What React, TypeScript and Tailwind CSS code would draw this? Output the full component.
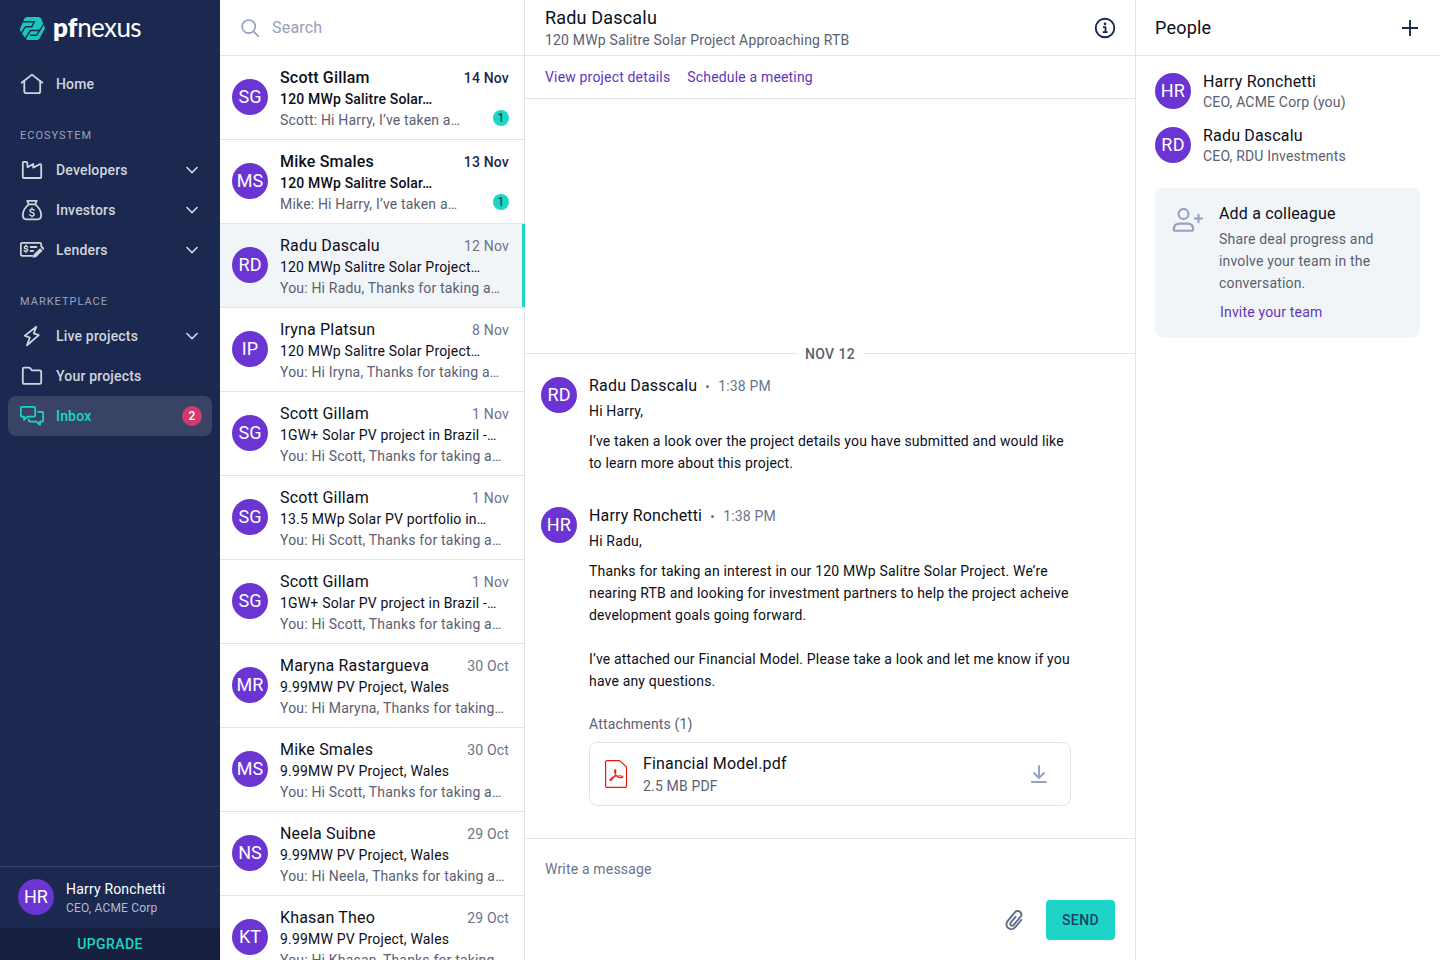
import React from "react";

type IconProps = { children: React.ReactNode; className?: string; width?: number };

function Icon({ children, className = "", width = 1.8 }: IconProps) {
  return (
    <svg
      viewBox="0 0 24 24"
      className={`size-6 shrink-0 ${className}`}
      fill="none"
      stroke="currentColor"
      strokeWidth={width}
      strokeLinecap="round"
      strokeLinejoin="round"
    >
      {children}
    </svg>
  );
}

const HomeIcon = () => (
  <Icon>
    <path d="M1.7 10.8 12 2.6l10.3 8.2" />
    <path d="M4.3 9v10.2a2 2 0 0 0 2 2h11.9a2 2 0 0 0 2-2V9" />
  </Icon>
);
const FactoryIcon = () => (
  <Icon>
    <path d="M2.8 19V4.8c0-.6.4-1 1-1h2.4c.6 0 1 .4 1 1L7.6 9.2 13.2 6v3.6l6.6-3.4c.7-.3 1.4 0 1.4.8V19c0 .6-.4 1-1 1H3.8c-.6 0-1-.4-1-1Z" />
  </Icon>
);
const MoneyBagIcon = () => (
  <Icon>
    <path d="M8.8 6.4 7.2 2.8h9.6l-1.6 3.6Z" />
    <path d="M8.8 6.4C6 8.6 2.8 12.8 2.8 17.3c0 2.2 1.3 4 3.6 4h11.200c2.300 0 3.600-1.800 3.600-4 0-4.500-3.200-8.700-6-10.900" />
    <path
      strokeWidth="1.4"
      d="M14.1 12.3c-.3-.8-1.1-1.1-2.1-1.1-1.2 0-2.1.6-2.1 1.6 0 2.4 4.4 1.1 4.4 3.5 0 1-1 1.6-2.3 1.6-1.2 0-2.1-.4-2.4-1.3M12 10v1.2M12 17.900v1.200"
    />
  </Icon>
);
const LenderIcon = () => (
  <Icon>
    <path d="M12.5 17.8H2.3c-.9 0-1.5-.6-1.5-1.5V6.3c0-.9.6-1.5 1.5-1.5h17.4c.9 0 1.5.6 1.500 1.500v1.900" />
    <path
      strokeWidth="1.4"
      d="M7.600 9c-.2-.6-.8-.8-1.600-.8-1 0-1.700.4-1.700 1.200 0 1.900 3.500.9 3.500 2.700 0 .8-.8 1.200-1.800 1.200-1 0-1.700-.3-1.900-1M6 7.100v1.100M6 13.300v1.100"
    />
    <path d="M10.600 9h5.800M10.600 13h2.500" />
    <path
      fill="currentColor"
      stroke="none"
      d="m20.100 10.200 2.500 2.500-6.300 6.200-3.100.9c-.3.1-.5-.2-.4-.4l.9-3.100Zm.7-.7.7-.7c.4-.4 1-.4 1.400 0l1 1c.4.4.4 1 0 1.400l-.7.7Z"
    />
  </Icon>
);
const BoltIcon = () => (
  <Icon>
    <path d="M16.300 2.800 4.800 11.600l5 2L7 21.300l11.800-10.200-5-1.800Z" />
  </Icon>
);
const FolderIcon = () => (
  <Icon>
    <path d="M2.800 18.600V5c0-.8.5-1.300 1.300-1.300h5c.4 0 .8.2 1 .5L12 6.400h7.900c.8 0 1.300.5 1.300 1.300v10.900c0 .8-.5 1.300-1.300 1.300H4.100c-.8 0-1.300-.5-1.300-1.300Z" />
  </Icon>
);
const ChatIcon = () => (
  <Icon>
    <path d="M4 12.700H2.200c-.8 0-1.400-.6-1.400-1.400V4.200c0-.8.6-1.400 1.400-1.400h11.600c.8 0 1.400.6 1.400 1.400v7.100c0 .8-.6 1.400-1.400 1.400H7.600L4 15.600Z" />
    <path d="M18 7.800h3.800c.8 0 1.400.6 1.400 1.400v7.100c0 .8-.6 1.400-1.400 1.400H20v3l-3.600-3h-6.200c-.8 0-1.400-.6-1.400-1.400v-.8" />
  </Icon>
);
const Chevron = () => (
  <svg viewBox="0 0 12 8" className="h-2 w-3" fill="none" stroke="currentColor" strokeWidth="1.6" strokeLinecap="round" strokeLinejoin="round">
    <path d="m.9 1.500 5.100 5.100 5.100-5.100" />
  </svg>
);

function Logo() {
  return (
    <div className="flex h-6 items-center">
      <svg viewBox="0 0 25 23" className="h-[23px] w-[25px]" fill="none">
        <path
          fill="#17c9bc"
          d="M7 0h11.500a3 3 0 0 1 2.600 1.500l3.500 8.400a3 3 0 0 1 0 2.400l-5 9a3 3 0 0 1-2.600 1.700H8a3 3 0 0 1-2.600-1.400L.4 14a3 3 0 0 1 0-3L4.400 1.500A3 3 0 0 1 7 0Z"
        />
        <path
          stroke="#1b2951"
          strokeWidth="1.400"
          d="M3 4.700h11.300l-2.500 5H5.600L.8 17M24 6.500l-4.200 7h-9.400L5 22M10 18.300h6.600L21 11.500"
        />
      </svg>
      <span className="mb-[3px] ml-2 flex font-[Lato,sans-serif] text-[26px] leading-6 text-white">
        <span className="font-extrabold">pf</span>
        <span className="tracking-[-0.6px]">nexus</span>
      </span>
    </div>
  );
}

function Avatar({ initials }: { initials: string }) {
  return (
    <div className="flex size-9 shrink-0 items-center justify-center rounded-full bg-[#6a35d2] text-lg leading-none text-white">
      {initials}
    </div>
  );
}

function NavItem({ icon, label, expandable, active, badge }: { icon: React.ReactNode; label: string; expandable?: boolean; active?: boolean; badge?: string }) {
  return (
    <a className={`flex h-10 items-center rounded-lg pl-3 text-sm font-medium tracking-[0.18px] ${active ? "bg-[#384366] pr-2.5 text-[#1cd5c7]" : "pr-3.5 text-[#d1d4dc]"}`}>
      {icon}
      <span className="ml-3 flex-1">{label}</span>
      {expandable && <Chevron />}
      {badge && <span className="flex size-5 items-center justify-center rounded-full bg-[#d13a6b] text-xs text-white">{badge}</span>}
    </a>
  );
}

const SectionLabel = ({ children }: { children: React.ReactNode }) => (
  <div className="pt-[25px] pb-[7px] pl-3 text-[11px] leading-[14px] tracking-[1px] text-[#9ba3b9]">{children}</div>
);

function Sidebar() {
  return (
    <aside className="flex w-[220px] shrink-0 flex-col bg-[#1b2951]">
      <div className="px-5 pt-4">
        <Logo />
      </div>
      <nav className="flex flex-1 flex-col px-2 pt-6">
        <NavItem icon={<HomeIcon />} label="Home" />
        <SectionLabel>ECOSYSTEM</SectionLabel>
        <NavItem icon={<FactoryIcon />} label="Developers" expandable />
        <NavItem icon={<MoneyBagIcon />} label="Investors" expandable />
        <NavItem icon={<LenderIcon />} label="Lenders" expandable />
        <SectionLabel>MARKETPLACE</SectionLabel>
        <NavItem icon={<BoltIcon />} label="Live projects" expandable />
        <NavItem icon={<FolderIcon />} label="Your projects" />
        <NavItem icon={<ChatIcon />} label="Inbox" active badge="2" />
      </nav>
      <div className="flex h-[62px] items-start gap-3 border-t border-[#384366] px-[18px] pt-3">
        <Avatar initials="HR" />
        <div className="tracking-[0.18px]">
          <div className="text-sm leading-5 text-white">Harry Ronchetti</div>
          <div className="text-xs leading-[18px] text-[#b4bac9]">CEO, ACME Corp</div>
        </div>
      </div>
      <button className="h-8 rounded-t bg-[#161f3d] text-sm font-medium tracking-[0.4px] text-[#1cd5c7]">UPGRADE</button>
    </aside>
  );
}

type Thread = { initials: string; name: string; date: string; subject: string; preview: string; unread?: boolean; selected?: boolean };

const threads: Thread[] = [
  { initials: "SG", name: "Scott Gillam", date: "14 Nov", subject: "120 MWp Salitre Solar…", preview: "Scott: Hi Harry, I’ve taken a…", unread: true },
  { initials: "MS", name: "Mike Smales", date: "13 Nov", subject: "120 MWp Salitre Solar…", preview: "Mike: Hi Harry, I’ve taken a…", unread: true },
  { initials: "RD", name: "Radu Dascalu", date: "12 Nov", subject: "120 MWp Salitre Solar Project…", preview: "You: Hi Radu, Thanks for taking a…", selected: true },
  { initials: "IP", name: "Iryna Platsun", date: "8 Nov", subject: "120 MWp Salitre Solar Project…", preview: "You: Hi Iryna, Thanks for taking a…" },
  { initials: "SG", name: "Scott Gillam", date: "1 Nov", subject: "1GW+ Solar PV project in Brazil -…", preview: "You: Hi Scott, Thanks for taking a…" },
  { initials: "SG", name: "Scott Gillam", date: "1 Nov", subject: "13.5 MWp Solar PV portfolio in…", preview: "You: Hi Scott, Thanks for taking a…" },
  { initials: "SG", name: "Scott Gillam", date: "1 Nov", subject: "1GW+ Solar PV project in Brazil -…", preview: "You: Hi Scott, Thanks for taking a…" },
  { initials: "MR", name: "Maryna Rastargueva", date: "30 Oct", subject: "9.99MW PV Project, Wales", preview: "You: Hi Maryna, Thanks for taking…" },
  { initials: "MS", name: "Mike Smales", date: "30 Oct", subject: "9.99MW PV Project, Wales", preview: "You: Hi Scott, Thanks for taking a…" },
  { initials: "NS", name: "Neela Suibne", date: "29 Oct", subject: "9.99MW PV Project, Wales", preview: "You: Hi Neela, Thanks for taking a…" },
  { initials: "KT", name: "Khasan Theo", date: "29 Oct", subject: "9.99MW PV Project, Wales", preview: "You: Hi Khasan, Thanks for taking…" },
];

function ThreadRow({ t }: { t: Thread }) {
  return (
    <li className={`relative flex h-[84px] shrink-0 gap-3 border-b border-[#e2e4e8] pr-[15px] pl-3 ${t.selected ? "bg-[#f1f5f8]" : ""}`}>
      <div className="pt-[23px]">
        <Avatar initials={t.initials} />
      </div>
      <div className="min-w-0 flex-1 pt-[11px] text-sm tracking-[0.18px] whitespace-nowrap">
        <div className="flex items-center justify-between">
          <span className={`text-base leading-[22px] tracking-[0.18px] text-[#0c0f1a] ${t.unread ? "font-medium" : ""}`}>{t.name}</span>
          <span className={`leading-[22px] ${t.unread ? "font-medium text-[#1b2951]" : "text-[#6b738c]"}`}>{t.date}</span>
        </div>
        <div className={`leading-[21px] text-[#0c0f1a] ${t.unread ? "font-medium" : ""}`}>{t.subject}</div>
        <div className="flex items-start justify-between">
          <span className="leading-[21px] text-[#5a6072]">{t.preview}</span>
          {t.unread && (
            <span className="flex size-4 items-center justify-center rounded-full bg-[#1cd5c7] text-xs leading-none text-[#1b2951]">1</span>
          )}
        </div>
      </div>
      {t.selected && <span className="absolute inset-y-0 -right-px w-[3px] bg-[#1cd5c7]" />}
    </li>
  );
}

function ThreadList() {
  return (
    <section className="flex w-[305px] shrink-0 flex-col border-r border-[#e2e4e8]">
      <div className="flex h-14 shrink-0 items-center gap-2.5 border-b border-[#e2e4e8] pl-[18px] text-[#96a0bf]">
        <Icon width={1.7}>
          <circle cx="10.700" cy="10.600" r="6.600" />
          <path d="m15.500 15.400 4.900 4.900" />
        </Icon>
        <span className="text-base tracking-[0.2px]">Search</span>
      </div>
      <ul className="flex flex-col">
        {threads.map((t, i) => (
          <ThreadRow key={i} t={t} />
        ))}
      </ul>
    </section>
  );
}

function Message({ initials, name, className = "", children }: { initials: string; name: string; className?: string; children: React.ReactNode }) {
  return (
    <article className={`flex gap-3 px-4 ${className}`}>
      <div className="pt-0.5">
        <Avatar initials={initials} />
      </div>
      <div className="w-[482px] text-sm leading-[22px] tracking-[0.17px] text-[#0c0f1a]">
        <div className="flex items-center text-[#6b738c]">
          <span className="text-base leading-[22px] tracking-[0.18px] text-[#0c0f1a]">{name}</span>
          <span className="mr-[9px] ml-[9px] size-[3px] rounded-full bg-[#6b738c]" />
          <span>1:38 PM</span>
        </div>
        <div className="pt-[3px]">{children}</div>
      </div>
    </article>
  );
}

function Conversation() {
  return (
    <main className="flex w-[611px] shrink-0 flex-col border-r border-[#e2e4e8] text-sm tracking-[0.17px]">
      <header className="flex h-14 shrink-0 items-center justify-between border-b border-[#e2e4e8] pr-[18px] pl-5">
        <div className="pt-px">
          <h1 className="text-lg leading-[23px] tracking-[0.18px] text-[#0c0f1a]">Radu Dascalu</h1>
          <p className="leading-[22px] text-[#5a6072]">120 MWp Salitre Solar Project Approaching RTB</p>
        </div>
        <Icon className="text-[#1b2951]" width={1.900}>
          <circle cx="12" cy="12" r="9.300" />
          <circle cx="12" cy="7.900" r="1.300" fill="currentColor" stroke="none" />
          <path strokeLinecap="butt" strokeWidth="1.800" d="M10 11.200h2.500V16M9.700 16.200h4.800" />
        </Icon>
      </header>
      <div className="flex h-[43px] shrink-0 items-center gap-[17px] border-b border-[#e2e4e8] pl-5 text-[#5f34bd]">
        <a>View project details</a>
        <a>Schedule a meeting</a>
      </div>
      <div className="flex flex-1 flex-col justify-end pb-8">
        <div className="mb-2.5 flex h-[22px] items-center gap-2 font-medium tracking-[0.4px] text-[#5a6072]">
          <span className="-mt-px h-px flex-1 bg-[#e2e4e8]" />
          NOV 12
          <span className="-mt-px h-px flex-1 bg-[#e2e4e8]" />
        </div>
        <Message initials="RD" name="Radu Dasscalu">
          <p>Hi Harry,</p>
          <p className="mt-2">I’ve taken a look over the project details you have submitted and would like<br />to learn more about this project.</p>
        </Message>
        <Message initials="HR" name="Harry Ronchetti" className="mt-[31px]">
          <p>Hi Radu,</p>
          <p className="mt-2">Thanks for taking an interest in our 120 MWp Salitre Solar Project. We’re<br />nearing RTB and looking for investment partners to help the project acheive<br />development goals going forward.</p>
          <p className="mt-[22px]">I’ve attached our Financial Model. Please take a look and let me know if you<br />have any questions.</p>
          <p className="mt-[21px] text-[#5a6072]">Attachments (1)</p>
          <div className="mt-[7px] flex h-16 items-center rounded-lg border border-[#e2e4e8] pr-[19px] pl-3.5">
            <svg viewBox="0 0 24 30" className="h-[30px] w-6" fill="none" stroke="#f0150c" strokeLinejoin="round" strokeLinecap="round">
              <path strokeWidth="1.200" d="M3 1.600h12.500l7 6.300V27a1.400 1.400 0 0 1-1.400 1.400H3A1.400 1.400 0 0 1 1.600 27V3A1.400 1.400 0 0 1 3 1.600Z" />
              <path strokeWidth="1.100" d="M11 10.800c-1 .5-.2 4 1.400 6 1.500 1.900 5 2.400 6.300 1.500.8-.8-1.200-1.700-3.500-1.500-3.300.2-7.700 1.700-8.900 3.300-.8 1.200 0 1.900 1.200.9 2.200-2 4.200-6.200 4.300-8.600.1-1.200-.3-1.800-.8-1.600Z" />
            </svg>
            <div className="mt-[2px] ml-[15px] flex-1">
              <div className="text-base leading-[22px] tracking-[0.18px]">Financial Model.pdf</div>
              <div className="text-[#5a6072]">2.5 MB PDF</div>
            </div>
            <Icon className="text-[#96a0bf]" width={1.900}>
              <path d="M12 4v11.500M7 11l5 5 5-5M4.800 20h14" />
            </Icon>
          </div>
        </Message>
      </div>
      <div className="flex h-[122px] shrink-0 flex-col justify-between border-t border-[#e2e4e8] px-5 pt-[19px] pb-5">
        <div className="leading-[22px] text-[#6b738c]">Write a message</div>
        <div className="flex items-center justify-end gap-[21px]">
          <Icon className="text-[#5f6b8c]" width={1.900}>
            <path d="m20.300 12-6 7.200c-1.900 2.300-4.900 2.600-7.100.8-2.100-1.700-2.400-4.600-.6-6.800l7.200-8.800c1.300-1.600 3.600-1.900 5.200-.6 1.500 1.300 1.700 3.500.4 5.100l-6.700 8c-.8.9-2 1-2.800.4-.8-.7-.9-1.800-.2-2.700l4.800-5.800" />
          </Icon>
          <button className="h-10 w-[69px] rounded bg-[#1cd5c7] font-medium tracking-[0.4px] text-[#1d4166]">SEND</button>
        </div>
      </div>
    </main>
  );
}

function Person({ initials, name, role }: { initials: string; name: string; role: string }) {
  return (
    <div className="flex h-9 items-center gap-3">
      <Avatar initials={initials} />
      <div>
        <div className="text-base leading-[21px] tracking-[0.18px] text-[#0c0f1a]">{name}</div>
        <div className="leading-5 text-[#5a6072]">{role}</div>
      </div>
    </div>
  );
}

function People() {
  return (
    <aside className="flex flex-1 flex-col text-sm tracking-[0.18px]">
      <header className="flex h-14 shrink-0 items-center justify-between border-b border-[#e2e4e8] pr-[18px] pl-[19px]">
        <h2 className="text-lg tracking-[0.2px] text-[#0c0f1a]">People</h2>
        <Icon className="text-[#1b2951]" width={1.900}>
          <path strokeLinecap="butt" d="M12 4v16M4 12h16" />
        </Icon>
      </header>
      <div className="flex flex-col gap-[18px] pt-[17px] pl-[19px]">
        <Person initials="HR" name="Harry Ronchetti" role="CEO, ACME Corp (you)" />
        <Person initials="RD" name="Radu Dascalu" role="CEO, RDU Investments" />
      </div>
      <div className="mt-[25px] mr-5 ml-[19px] flex h-[150px] rounded-lg bg-[#f1f5f8] pt-[15px] pl-[17px]">
        <svg viewBox="0 0 31 24" className="mt-[5px] h-6 w-[31px] shrink-0" fill="none" stroke="#96a0bf" strokeWidth="2.100" strokeLinecap="round" strokeLinejoin="round">
          <circle cx="11.500" cy="6" r="5" />
          <path d="M1.800 21.800c0-4 2-6.200 5.600-6.200h8.200c3.600 0 5.600 2.200 5.600 6.200 0 .6-.4 1-1 1H2.800c-.6 0-1-.4-1-1Z" />
          <path d="M26.500 6.700v7.600M22.700 10.500h7.400" />
        </svg>
        <div className="ml-4 leading-[22px] text-[#5a6072]">
          <div className="text-base leading-[22px] tracking-[0.18px] text-[#0c0f1a]">Add a colleague</div>
          <p className="mt-[3px]">Share deal progress and<br />involve your team in the<br />conversation.</p>
          <a className="mt-[7px] ml-px block text-[#5f34bd]">Invite your team</a>
        </div>
      </div>
    </aside>
  );
}

export default function App() {
  return (
    <div className="flex h-[960px] w-[1440px] overflow-hidden bg-white font-[Roboto,sans-serif]">
      <Sidebar />
      <ThreadList />
      <Conversation />
      <People />
    </div>
  );
}
